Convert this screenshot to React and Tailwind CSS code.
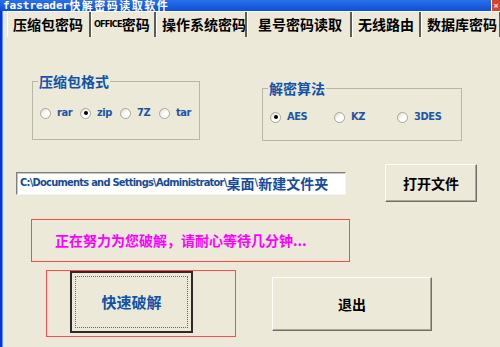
import React from 'react';

const cjk = '"Noto Sans CJK SC", "DejaVu Sans", sans-serif';
const narrow = '"DejaVu Sans Condensed", "DejaVu Sans", sans-serif';

const tabs = [
  { label: '压缩包密码', w: 'w-[84px]', pl: 'pl-[5px]' },
  { label: 'OFFICE密码', w: 'w-[65px]', pl: 'pl-[2px]', office: true },
  { label: '操作系统密码', w: 'w-[91px]', pl: 'pl-[5px]' },
  { label: '星号密码读取', w: 'w-[105px]', pl: 'pl-[10px]' },
  { label: '无线路由', w: 'w-[69px]', pl: 'pl-[5px]' },
  { label: '数据库密码', w: 'w-[80px]', pl: 'pl-[5px]' },
];

const Radio = ({ label, checked, w }) => (
  <div className={`flex items-center h-[14px] ${w}`}>
    <span className="w-[11px] h-[11px] rounded-full border border-[#a6a69a] bg-gradient-to-br from-[#d8d6c8] via-white to-white flex items-center justify-center shrink-0">
      {checked && <span className="w-[4px] h-[4px] rounded-full bg-black" />}
    </span>
    <span
      className="ml-[6px] text-[11px] tracking-[-0.4px] font-bold leading-[14px] text-[#1d55a6]"
      style={{ fontFamily: narrow }}
    >
      {label}
    </span>
  </div>
);

const XpButton = ({ children, className }) => (
  <div
    className={`flex items-center justify-center bg-[#ece9d8] border border-t-white border-l-white border-b-[#716f64] border-r-[#716f64] shadow-[inset_-1px_-1px_0_#aca899] ${className}`}
  >
    <span className="text-[14px] font-bold text-black" style={{ fontFamily: cjk }}>
      {children}
    </span>
  </div>
);

export default function App() {
  return (
    <div className="w-[500px] h-[347px] bg-[#ece9d8] overflow-hidden flex flex-col">
      {/* title bar */}
      <div className="h-[11px] shrink-0 bg-gradient-to-b from-[#2a70e8] to-[#0a4fd8] flex items-center justify-between overflow-hidden">
        <div className="ml-[3px] flex items-center leading-[11px] text-white font-bold whitespace-nowrap">
          <span className="text-[11px]" style={{ fontFamily: '"DejaVu Sans Mono", monospace' }}>
            fastreader
          </span>
          <span className="text-[11px] tracking-[1.5px]" style={{ fontFamily: cjk }}>
            快解密码读取软件
          </span>
        </div>
        <div className="w-[9px] h-[11px] bg-[#d8452a] border-l border-white flex items-center justify-center text-white text-[9px] font-bold leading-none">
          ×
        </div>
      </div>

      <div className="flex flex-1">
        <div className="w-[3px] shrink-0 bg-[#0831d9] border-r border-[#5a8ef0]" />
        <div className="flex-1 flex flex-col">
          {/* tabs */}
          <div className="h-[26px] flex items-center border-t border-white ml-[4px]">
            {tabs.map((t) => (
              <div
                key={t.label}
                className={`h-full flex items-center ${t.w} ${t.pl} border-l border-l-white border-r-2 border-r-[#5c5c58] shrink-0 whitespace-nowrap overflow-hidden`}
              >
                {t.office ? (
                  <span className="flex items-center text-black font-bold">
                    <span className="text-[9px] tracking-[-0.8px]" style={{ fontFamily: narrow }}>
                      OFFICE
                    </span>
                    <span className="text-[14px]" style={{ fontFamily: cjk }}>
                      密码
                    </span>
                  </span>
                ) : (
                  <span className="text-[14px] font-bold text-black" style={{ fontFamily: cjk }}>
                    {t.label}
                  </span>
                )}
              </div>
            ))}
          </div>

          {/* group boxes */}
          <div className="flex items-start">
            <fieldset className="ml-[29px] mt-[36px] w-[168px] border border-[#b8b6a6] pl-[7px] pt-[17px] pb-[19px]">
              <legend
                className="-ml-[2px] px-[1px] text-[14px] leading-[16px] font-bold text-[#1152a8]"
                style={{ fontFamily: cjk }}
              >
                压缩包格式
              </legend>
              <div className="flex">
                <Radio label="rar" w="w-[40px]" />
                <Radio label="zip" w="w-[40px]" checked />
                <Radio label="7Z" w="w-[39px]" />
                <Radio label="tar" w="w-[40px]" />
              </div>
            </fieldset>
            <fieldset className="ml-[62px] mt-[43px] w-[200px] border border-[#b8b6a6] pl-[7px] pt-[14px] pb-[16px]">
              <legend
                className="-ml-[2px] px-[1px] text-[14px] leading-[16px] font-bold text-[#1152a8]"
                style={{ fontFamily: cjk }}
              >
                解密算法
              </legend>
              <div className="flex">
                <Radio label="AES" w="w-[64px]" checked />
                <Radio label="KZ" w="w-[63px]" />
                <Radio label="3DES" w="w-[60px]" />
              </div>
            </fieldset>
          </div>

          {/* path row */}
          <div className="flex items-start mt-[23px]">
            <div className="ml-[13px] mt-[8px] w-[330px] h-[23px] bg-white border border-t-[#808080] border-l-[#808080] border-b-[#f4f4f0] border-r-[#f4f4f0] shadow-[inset_1px_1px_0_#c8c6b8] flex items-center pl-[3px] overflow-hidden whitespace-nowrap text-[#164c96] font-bold">
              <span className="text-[11px] tracking-[-0.75px]" style={{ fontFamily: narrow }}>
                C:\Documents and Settings\Administrator\
              </span>
              <span className="text-[14px]" style={{ fontFamily: cjk }}>
                桌面
              </span>
              <span className="text-[11px]" style={{ fontFamily: narrow }}>
                \
              </span>
              <span className="text-[14px]" style={{ fontFamily: cjk }}>
                新建文件夹
              </span>
            </div>
            <XpButton className="ml-[39px] w-[92px] h-[38px]">打开文件</XpButton>
          </div>

          {/* status */}
          <div className="ml-[28px] mt-[17px] w-[319px] h-[43px] border border-[#ff4a4a] flex items-center pl-[23px]">
            <span className="text-[14px] font-bold text-[#ff00ff] whitespace-nowrap" style={{ fontFamily: cjk }}>
              正在努力为您破解，请耐心等待几分钟...
            </span>
          </div>

          {/* bottom buttons */}
          <div className="flex items-start mt-[8px]">
            <div className="ml-[43px] w-[190px] h-[67px] border border-[#ff4a4a]">
              <div className="ml-[23px] w-[123px] h-[62px] border-2 border-[#2a2a2a] bg-[#ece9d8] p-[3px]">
                <div className="w-full h-full border border-dotted border-[#7a6a40] flex items-center justify-center">
                  <span className="text-[15px] font-bold text-[#1152a8]" style={{ fontFamily: cjk }}>
                    快速破解
                  </span>
                </div>
              </div>
            </div>
            <XpButton className="ml-[36px] mt-[7px] w-[160px] h-[54px]">退出</XpButton>
          </div>
        </div>
      </div>
    </div>
  );
}
